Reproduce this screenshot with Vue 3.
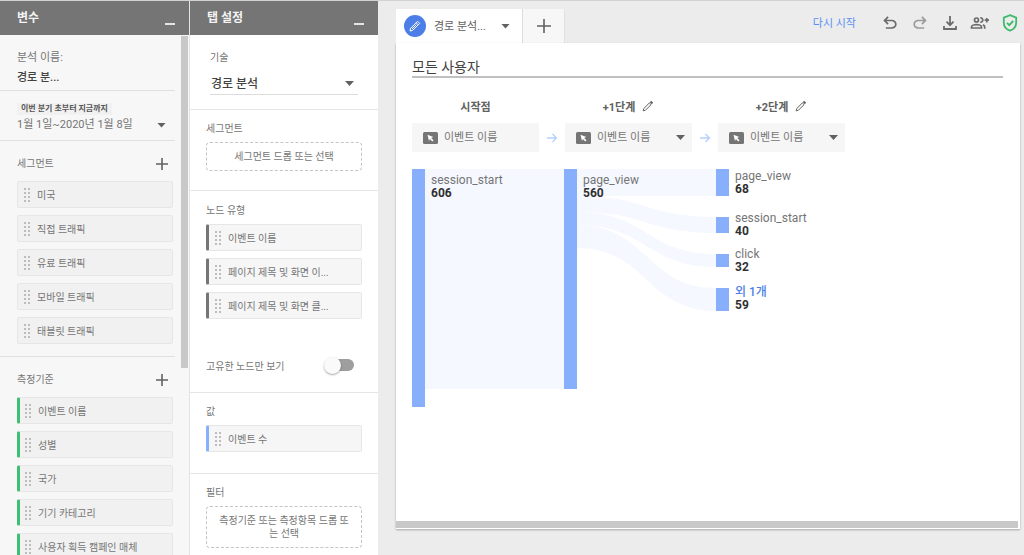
<script setup>
import { ref } from 'vue'

const segments = ['미국', '직접 트래픽', '유료 트래픽', '모바일 트래픽', '태블릿 트래픽']
const dimensions = ['이벤트 이름', '성별', '국가', '기기 카테고리', '사용자 획득 캠페인 매체']
const nodeTypes = ['이벤트 이름', '페이지 제목 및 화면 이...', '페이지 제목 및 화면 클...']
const uniqueOnly = ref(false)

const steps = [
  { id: 'start', title: '시작점', editable: false },
  { id: 'step1', title: '+1단계', editable: true },
  { id: 'step2', title: '+2단계', editable: true }
]

const nodes = [
  { x: 0, y: 0, h: 238, name: 'session_start', value: 606, ty: 15 },
  { x: 152, y: 0, h: 220, name: 'page_view', value: 560, ty: 15 },
  { x: 304, y: 0, h: 27, name: 'page_view', value: 68, ty: 11 },
  { x: 304, y: 48, h: 16, name: 'session_start', value: 40, ty: 53 },
  { x: 304, y: 85, h: 13, name: 'click', value: 32, ty: 89 },
  { x: 304, y: 119, h: 23, name: '외 1개', value: 59, ty: 127, more: true }
]

const links = [
  { x0: 13, x1: 152, a: 0, b: 0, h: 220 },
  { x0: 165, x1: 304, a: 0, b: 0, h: 27 },
  { x0: 165, x1: 304, a: 27, b: 48, h: 16 },
  { x0: 165, x1: 304, a: 43, b: 85, h: 13 },
  { x0: 165, x1: 304, a: 56, b: 119, h: 23 }
]

function linkPath({ x0, x1, a, b, h }) {
  const m = (x0 + x1) / 2
  return `M${x0} ${a}C${m} ${a} ${m} ${b} ${x1} ${b}V${b + h}C${m} ${b + h} ${m} ${a + h} ${x0} ${a + h}Z`
}
</script>

<template>
  <div class="app">
    <aside class="panel variables">
      <header class="panel-head">
        <h2>변수</h2>
        <button class="minimize" aria-label="변수 최소화"></button>
      </header>
      <div class="scroller">
        <div class="var-body">
          <section class="analysis">
            <label for="analysis-name">분석 이름:</label>
            <input id="analysis-name" value="경로 분..." />
          </section>
          <section class="period">
            <span class="period-tag">이번 분기 초부터 지금까지</span>
            <button class="period-range">
              1월 1일~2020년 1월 8일
              <span class="caret"></span>
            </button>
          </section>
          <section class="group">
            <div class="group-head">
              <h3>세그먼트</h3>
              <button class="plus" aria-label="세그먼트 추가">
                <svg width="14" height="14" viewBox="0 0 14 14"><path d="M7 1v12M1 7h12" /></svg>
              </button>
            </div>
            <ul class="chips">
              <li v-for="s in segments" :key="s" class="chip textured"><i class="grip"></i>{{ s }}</li>
            </ul>
          </section>
          <section class="group">
            <div class="group-head">
              <h3>측정기준</h3>
              <button class="plus" aria-label="측정기준 추가">
                <svg width="14" height="14" viewBox="0 0 14 14"><path d="M7 1v12M1 7h12" /></svg>
              </button>
            </div>
            <ul class="chips">
              <li v-for="d in dimensions" :key="d" class="chip textured green"><i class="grip"></i>{{ d }}</li>
            </ul>
          </section>
        </div>
        <div class="v-track"><div class="v-thumb"></div></div>
      </div>
    </aside>

    <aside class="panel settings">
      <header class="panel-head">
        <h2>탭 설정</h2>
        <button class="minimize" aria-label="탭 설정 최소화"></button>
      </header>
      <section class="technique">
        <label for="technique">기술</label>
        <div class="select-line">
          <select id="technique"><option>경로 분석</option></select>
          <span class="caret"></span>
        </div>
      </section>
      <section class="set seg-set">
        <h3>세그먼트</h3>
        <button class="drop">세그먼트 드롭 또는 선택</button>
      </section>
      <section class="set node-set">
        <h3>노드 유형</h3>
        <ul class="chips">
          <li v-for="n in nodeTypes" :key="n" class="chip dark"><i class="grip"></i>{{ n }}</li>
        </ul>
        <label class="toggle">
          <span>고유한 노드만 보기</span>
          <input v-model="uniqueOnly" type="checkbox" />
        </label>
      </section>
      <section class="set value-set">
        <h3>값</h3>
        <ul class="chips">
          <li class="chip blue"><i class="grip"></i>이벤트 수</li>
        </ul>
      </section>
      <section class="set filter-set">
        <h3>필터</h3>
        <button class="drop tall">측정기준 또는 측정항목 드롭 또는 선택</button>
      </section>
    </aside>

    <main class="canvas">
      <div class="top-bar">
        <div class="tab">
          <span class="tab-badge">
            <svg width="14" height="14" viewBox="0 0 14 14"><path d="M2 12l.6-2.700 7-7 2.100 2.100-7 7zM8.200 3.700l2.100 2.100M4 10l4.400-4.400" /></svg>
          </span>
          <span class="tab-name">경로 분석...</span>
          <button class="caret-btn" aria-label="탭 메뉴"><span class="caret"></span></button>
        </div>
        <button class="tab-add plus" aria-label="탭 추가">
          <svg width="14" height="14" viewBox="0 0 14 14"><path d="M7 0v14M0 7h14" /></svg>
        </button>
        <div class="tools">
          <button class="restart">다시 시작</button>
          <button class="tool" aria-label="실행취소">
            <svg width="20" height="20" viewBox="0 0 24 24"><path d="M7 19v-2h7.1q1.575 0 2.737-1T18 13.500 16.838 11 14.100 10H7.800l2.600 2.600L9 14 4 9l5-5 1.400 1.400L7.800 8h6.300q2.425 0 4.163 1.575T20 13.500t-1.737 3.925T14.100 19z" /></svg>
          </button>
          <button class="tool faded" aria-label="재실행">
            <svg width="20" height="20" viewBox="0 0 24 24"><path transform="matrix(-1 0 0 1 24 0)" d="M7 19v-2h7.1q1.575 0 2.737-1T18 13.500 16.838 11 14.100 10H7.800l2.600 2.600L9 14 4 9l5-5 1.400 1.400L7.800 8h6.300q2.425 0 4.163 1.575T20 13.500t-1.737 3.925T14.100 19z" /></svg>
          </button>
          <button class="tool" aria-label="다운로드">
            <svg width="20" height="20" viewBox="0 0 20 20" class="line"><path d="M10 3v9M6.500 8.700l3.500 3.500 3.500-3.500M4 13v3h12v-3" /></svg>
          </button>
          <button class="tool" aria-label="공유">
            <svg width="20" height="20" viewBox="0 0 20 20" class="line thin">
              <circle cx="6.500" cy="7" r="2" />
              <path d="M1.500 15v-1.100c0-1.300 2.600-2.300 5-2.300s5 1 5 2.300V15zM10.300 5c1.300-.3 2.500.6 2.500 2s-1.200 2.300-2.500 2M13 11.800c1.200.6 1.700 1.300 1.700 2.300v1.700M16.800 5v4.400M14.600 7.200H19" />
            </svg>
          </button>
          <button class="tool ok" aria-label="데이터 품질">
            <svg width="20" height="20" viewBox="0 0 20 20" class="line"><path d="M10 2.200l6.200 2.400v4.900c0 3.800-2.500 6.900-6.200 8.200-3.700-1.300-6.200-4.400-6.200-8.200V4.600zM7 9.900l2.200 2.200L13.200 8" /></svg>
          </button>
        </div>
      </div>

      <div class="sheet">
        <div class="sheet-body">
          <h1>모든 사용자</h1>
          <div class="steps">
            <template v-for="(s, i) in steps" :key="s.id">
              <svg v-if="i > 0" class="arrow" width="12" height="12" viewBox="0 0 12 12"><path d="M1 6h9.500M6.500 2l4 4-4 4" /></svg>
              <div class="step">
                <div class="step-title">
                  <label :for="s.id">{{ s.title }}</label>
                  <button v-if="s.editable" class="pencil" :aria-label="s.title + ' 수정'">
                    <svg width="12" height="12" viewBox="0 0 12 12"><path d="M1.200 10.800l.5-2.200 5.600-5.600 1.700 1.700-5.600 5.600z" /><path class="tip" d="M7.800 2.300l1.400-1.500 2 2L9.700 4.200z" /></svg>
                  </button>
                </div>
                <div class="step-box">
                  <svg width="15" height="12" viewBox="0 0 15 12"><rect width="15" height="12" rx="1.500" fill="#757575" /><path d="M4.500 2.800l5.800 2.100-2.200 1 2.400 2.400-1.200 1.200-2.400-2.400-.9 2z" fill="#fff" /></svg>
                  <select :id="s.id"><option>이벤트 이름</option></select>
                  <span v-if="s.editable" class="caret"></span>
                </div>
              </div>
            </template>
          </div>
          <svg class="sankey" width="440" height="240" viewBox="0 0 440 240">
            <path v-for="(l, i) in links" :key="'l' + i" :d="linkPath(l)" fill="#f5f8ff" />
            <g v-for="(n, i) in nodes" :key="'n' + i">
              <rect :x="n.x" :y="n.y" width="13" :height="n.h" fill="#87affc" />
              <a v-if="n.more" href="#"><text :x="n.x + 19" :y="n.ty" class="more">{{ n.name }}</text></a>
              <text v-else :x="n.x + 19" :y="n.ty" class="name">{{ n.name }}</text>
              <text :x="n.x + 19" :y="n.ty + 13" class="value">{{ n.value }}</text>
            </g>
          </svg>
        </div>
        <div class="h-thumb"></div>
      </div>
    </main>
  </div>
</template>

<style>
body {
  margin: 0;
  overflow: hidden;
}
</style>

<style scoped>
.app {
  display: grid;
  grid-template-columns: 190px 188px 1fr;
  height: 100vh;
  overflow: hidden;
  box-sizing: border-box;
  border-top: 1px solid #d2d2d2;
  background: #ececec;
  color: #757575;
  font-family: Roboto, "Noto Sans CJK KR", sans-serif;
  font-size: 11px;
}
.app *,
.app *::before {
  box-sizing: border-box;
}
button,
input,
select {
  margin: 0;
  padding: 0;
  border: 0;
  border-radius: 0;
  background: none;
  color: inherit;
  font: inherit;
  appearance: none;
}
h1,
h2,
h3,
ul {
  margin: 0;
  padding: 0;
  list-style: none;
  font-weight: 400;
}
svg {
  display: block;
  flex: none;
}
.panel {
  display: flex;
  flex-direction: column;
  min-height: 0;
  overflow: hidden;
}
.variables {
  background: #f7f7f7;
  border-right: 1px solid #e4e4e4;
}
.settings {
  background: #fff;
}
.panel-head {
  flex: none;
  display: flex;
  align-items: center;
  justify-content: space-between;
  height: 34px;
  padding: 0 14px 0 17px;
  background: #757575;
  color: #f4f4f4;
}
.panel-head h2 {
  font-size: 12px;
  font-weight: 700;
  line-height: 18px;
}
.minimize {
  width: 10px;
  height: 14px;
  border-bottom: 2px solid #e4e4e4;
}
.caret {
  flex: none;
  width: 9px;
  height: 5px;
  background: #616161;
  clip-path: polygon(0 0, 100% 0, 50% 100%);
}
.plus {
  display: grid;
  place-items: center;
}
.plus path {
  stroke: #616161;
  stroke-width: 1.6;
}

.scroller {
  flex: 1;
  display: flex;
  min-height: 0;
  overflow: hidden;
}
.var-body {
  flex: 1;
}
.var-body section {
  border-bottom: 1px solid #e0e0e0;
}
.v-track {
  width: 8px;
  margin: 1px 0 0 6px;
}
.v-thumb {
  width: 7px;
  height: 332px;
  background: #c8c8c8;
}
.analysis {
  display: flex;
  flex-direction: column;
  padding: 14px 17px 6px;
  line-height: 17px;
}
.analysis input {
  width: 100%;
  height: 18px;
  padding-top: 1px;
  color: #424242;
  font-weight: 500;
  line-height: 17px;
}
.period {
  display: flex;
  flex-direction: column;
  align-items: flex-start;
  padding: 12px 9px 5px 17px;
}
.period-tag {
  padding: 0 4px;
  background: #f1f1f1;
  color: #555;
  font-size: 8px;
  font-weight: 700;
  line-height: 12px;
}
.period-range {
  display: flex;
  align-items: center;
  justify-content: space-between;
  width: 100%;
  line-height: 20px;
}
.group {
  padding: 12px 2px 12px 17px;
}
.group-head {
  display: flex;
  align-items: center;
  justify-content: space-between;
  height: 22px;
  padding-right: 4px;
  margin-bottom: 6px;
}
h3 {
  font-size: 10px;
  line-height: 22px;
}
.chips {
  display: flex;
  flex-direction: column;
  gap: 7px;
}
.chip {
  display: flex;
  align-items: center;
  gap: 6px;
  height: 27px;
  padding-left: 6px;
  border: 1px solid #e6e6e6;
  border-radius: 2px;
  background: #f6f6f6;
  font-size: 10px;
  white-space: nowrap;
}
.textured {
  background: #f1f1f1;
}
.green {
  padding-left: 5px;
  border-left: 3px solid #3fbf74;
}
.dark {
  border-left: 3px solid #757575;
}
.blue {
  border-left: 3px solid #87affc;
}
.grip {
  width: 7px;
  height: 15px;
  margin-top: 2px;
  background-image: radial-gradient(circle at 1px 1px, #bdbdbd 1px, transparent 1px);
  background-size: 4px 4px;
}

.technique {
  padding: 13px 20px 14px;
  border-bottom: 1px solid #e6e6e6;
}
.technique label {
  display: block;
  font-size: 10px;
  line-height: 20px;
}
.select-line {
  display: flex;
  align-items: center;
  height: 27px;
  padding: 5px 4px 0 1px;
  border-bottom: 1px solid #dcdcdc;
}
.select-line select {
  flex: 1;
  color: #424242;
  font-size: 12px;
  font-weight: 500;
}
.set {
  padding: 8px 16px 0;
  border-bottom: 1px solid #e6e6e6;
}
.set h3 {
  margin-bottom: 2px;
}
.seg-set {
  padding-bottom: 19px;
}
.node-set {
  padding-top: 9px;
  padding-bottom: 17px;
}
.value-set {
  padding-bottom: 21px;
}
.filter-set {
  border-bottom: 0;
}
.drop {
  display: block;
  width: 100%;
  height: 29px;
  border: 1px dashed #c4c4c4;
  border-radius: 4px;
  font-size: 10px;
  line-height: 13px;
}
.tall {
  height: 42px;
  padding: 0 10px;
  word-break: break-all;
}
.toggle {
  display: flex;
  align-items: center;
  justify-content: space-between;
  height: 20px;
  margin-top: 36px;
  padding-right: 8px;
  font-size: 10px;
}
.toggle input {
  position: relative;
  width: 26px;
  height: 12px;
  border-radius: 6px;
  background: #9e9e9e;
}
.toggle input::before {
  content: "";
  position: absolute;
  top: -2px;
  left: -4px;
  width: 17px;
  height: 17px;
  border-radius: 50%;
  background: #fafafa;
  box-shadow: 0 1px 2px rgba(0, 0, 0, 0.35);
}
.toggle input:checked::before {
  left: 13px;
}

.canvas {
  display: flex;
  flex-direction: column;
  min-width: 0;
  padding: 8px 4px 26px 18px;
}
.top-bar {
  display: flex;
  height: 34px;
}
.tab {
  display: flex;
  align-items: center;
  width: 127px;
  padding: 0 12px 0 8px;
  border-right: 1px solid #dcdcdc;
  background: #fff;
}
.tab-badge {
  display: grid;
  place-items: center;
  width: 22px;
  height: 22px;
  border-radius: 50%;
  background: #4c7ee8;
}
.tab-badge path {
  fill: none;
  stroke: #fff;
}
.tab-name {
  flex: 1;
  padding: 0 0 3px 8px;
  color: #616161;
  white-space: nowrap;
}
.caret-btn {
  display: grid;
  place-items: center;
}
.tab-add {
  width: 42px;
  border-right: 1px solid #e0e0e0;
  background: #f7f7f7;
}
.tools {
  flex: 1;
  display: flex;
  justify-content: flex-end;
  align-items: center;
  gap: 10px;
  height: 28px;
}
.restart {
  margin-right: 14px;
  padding-bottom: 2px;
  color: #5b8ff5;
}
.tool {
  color: #6b6b6b;
}
.tool svg {
  fill: currentColor;
}
.tool svg.line {
  fill: none;
  stroke: currentColor;
  stroke-width: 1.8;
}
.tool svg.thin {
  stroke-width: 1.7;
}
.faded {
  color: #9a9a9a;
}
.ok {
  color: #3dba6c;
}
.sheet {
  flex: 1;
  display: flex;
  flex-direction: column;
  justify-content: space-between;
  min-height: 0;
  background: #fff;
  box-shadow: 0 1px 2px rgba(0, 0, 0, 0.3);
}
.sheet-body {
  padding: 15px 17px 0 16px;
}
h1 {
  border-bottom: 2px solid #c0c0c0;
  color: #424242;
  font-size: 14px;
  line-height: 18px;
}
.steps {
  display: flex;
  align-items: flex-end;
  gap: 7px;
  margin-top: 18px;
}
.step {
  width: 127px;
}
.arrow {
  margin-bottom: 8px;
}
.arrow path {
  fill: none;
  stroke: #b5d0fd;
  stroke-width: 1.3;
}
.step-title {
  display: flex;
  align-items: center;
  justify-content: center;
  gap: 7px;
  height: 20px;
  margin-bottom: 7px;
  color: #616161;
  font-weight: 700;
}
.pencil path {
  fill: none;
  stroke: #616161;
}
.pencil .tip {
  fill: #616161;
  stroke: none;
}
.step-box {
  display: flex;
  align-items: center;
  height: 29px;
  padding: 0 7px 0 11px;
  background: #f6f6f6;
}
.step-box select {
  flex: 1;
  min-width: 0;
  padding-left: 6px;
}
.sankey {
  margin-top: 17px;
  overflow: visible;
}
.sankey text {
  font-size: 12px;
}
.name {
  fill: #757575;
}
.more {
  fill: #4c7ee8;
  font-weight: 500;
}
.value {
  fill: #303030;
  font-weight: 700;
}
.h-thumb {
  height: 7px;
  margin: 0 2px 1px 0;
  background: #c8c8c8;
}
</style>
